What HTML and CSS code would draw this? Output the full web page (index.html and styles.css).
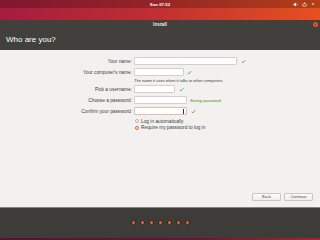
FILE: index.html
```html
<!DOCTYPE html>
<html lang="en">
<head>
    <meta charset="UTF-8">
    <title>Install</title>
    <link rel="stylesheet" href="styles.css">
</head>
<body>
<div class="screen">
    <div class="topbar">
        <span></span>
        <span class="clock">Sun 07:52</span>
        <span class="tray">
            <svg width="5" height="5" viewBox="0 0 10 10"><path d="M1 3.5h2l3-2.5v8l-3-2.5h-2z" fill="#fff"/><path d="M7.5 3a3 3 0 0 1 0 4" stroke="#fff" fill="none" stroke-width="1.2"/></svg>
            <svg width="5" height="5" viewBox="0 0 10 10"><path d="M3 2.6a3.6 3.6 0 1 0 4 0" stroke="#fff" fill="none" stroke-width="1.4"/><path d="M5 0.8v4" stroke="#fff" stroke-width="1.4"/></svg>
            <svg width="4" height="4" viewBox="0 0 10 10"><path d="M1.5 3.5h7l-3.5 4z" fill="#fff"/></svg>
        </span>
    </div>
    <div class="desktop-gap"></div>

    <div class="window">
        <div class="titlebar">
            <span></span>
            <span class="title">Install</span>
            <span class="close">
                <svg width="5" height="5" viewBox="0 0 10 10"><circle cx="5" cy="5" r="5" fill="#e9561f"/><path d="M3.3 3.3l3.4 3.4M6.7 3.3l-3.4 3.4" stroke="#3c3b37" stroke-width="1.3"/></svg>
            </span>
        </div>
        <div class="page-title">Who are you?</div>

        <div class="content">
            <div class="form">
                <div class="row">
                    <span class="label">Your name:</span>
                    <span class="field wide"></span>
                    <svg class="check" width="5" height="5" viewBox="0 0 10 10"><path d="M1.5 5.5l2.3 2.5 4.8-6" stroke="#6fae2b" fill="none" stroke-width="1.8"/></svg>
                </div>
                <div class="row">
                    <span class="label">Your computer's name:</span>
                    <span class="field host"></span>
                    <svg class="check" width="5" height="5" viewBox="0 0 10 10"><path d="M1.5 5.5l2.3 2.5 4.8-6" stroke="#6fae2b" fill="none" stroke-width="1.8"/></svg>
                </div>
                <div class="hint">The name it uses when it talks to other computers.</div>
                <div class="row">
                    <span class="label">Pick a username:</span>
                    <span class="field user"></span>
                    <svg class="check" width="5" height="5" viewBox="0 0 10 10"><path d="M1.5 5.5l2.3 2.5 4.8-6" stroke="#6fae2b" fill="none" stroke-width="1.8"/></svg>
                </div>
                <div class="row">
                    <span class="label">Choose a password:</span>
                    <span class="field pass"></span>
                    <span class="strength">Strong password</span>
                </div>
                <div class="row">
                    <span class="label">Confirm your password:</span>
                    <span class="field pass focused"><span class="cursor"></span></span>
                    <svg class="check" width="5" height="5" viewBox="0 0 10 10"><path d="M1.5 5.5l2.3 2.5 4.8-6" stroke="#6fae2b" fill="none" stroke-width="1.8"/></svg>
                </div>
                <div class="options">
                    <div class="option"><span class="radio"></span>Log in automatically</div>
                    <div class="option"><span class="radio checked"></span>Require my password to log in</div>
                </div>
            </div>

            <div class="actions">
                <span class="btn">Back</span>
                <span class="btn">Continue</span>
            </div>
        </div>

        <div class="progress">
            <span class="dot"></span>
            <span class="dot"></span>
            <span class="dot"></span>
            <span class="dot"></span>
            <span class="dot"></span>
            <span class="dot"></span>
            <span class="dot"></span>
        </div>
    </div>
    <div class="desktop-strip"></div>
</div>
</body>
</html>
```

FILE: styles.css
```css
body {
    margin: 0;
    font-family: "Liberation Sans", Arial, sans-serif;
    overflow: hidden;
}
.screen {
    width: 320px;
    height: 240px;
    display: flex;
    flex-direction: column;
    background: linear-gradient(90deg, #a41d3e 0%, #bd2d33 45%, #e5511f 100%);
}

/* top panel */
.topbar {
    height: 8px;
    display: grid;
    grid-template-columns: 1fr auto 1fr;
    align-items: center;
    background: rgba(0,0,0,0.22);
    color: #fff;
}
.clock {
    font-size: 4.3px;
    font-weight: bold;
}
.tray {
    justify-self: end;
    display: flex;
    align-items: center;
    gap: 4px;
    margin-right: 5px;
}
.tray svg { display: block; }
.desktop-gap { height: 12px; }

/* installer window */
.window {
    display: flex;
    flex-direction: column;
    background: #41403c;
}
.titlebar {
    height: 9px;
    display: grid;
    grid-template-columns: 1fr auto 1fr;
    align-items: center;
    color: #e8e8e6;
}
.title {
    font-size: 4.8px;
    font-weight: bold;
}
.close {
    justify-self: end;
    margin-right: 2px;
    display: flex;
}
.page-title {
    height: 21px;
    line-height: 21px;
    padding-left: 6px;
    font-size: 8px;
    color: #ffffff;
}

.content {
    height: 157px;
    background: #f2f1f0;
    border-bottom: 1px solid #85837f;
    display: flex;
    flex-direction: column;
}
.form {
    padding-top: 7px;
    display: flex;
    flex-direction: column;
}
.row {
    height: 8px;
    display: flex;
    align-items: center;
    margin-bottom: 3px;
    font-size: 4.8px;
    color: #3c3c3c;
}
.label {
    width: 132px;
    margin-right: 2px;
    text-align: right;
}
.field {
    height: 8px;
    box-sizing: border-box;
    background: #fff;
    border: 1px solid #d3cec9;
    border-radius: 1px;
    margin-right: 3px;
    display: flex;
    align-items: center;
    justify-content: flex-end;
}
.field.wide { width: 103px; margin-right: 4px; }
.field.host { width: 50px; }
.field.user { width: 41px; margin-right: 4px; }
.field.pass { width: 53px; }
.field.focused {
    border-color: #e6bba8;
    margin-right: 4px;
}
.cursor {
    width: 0.6px;
    height: 5px;
    background: #333;
    margin-right: 2px;
}
.check { display: block; }
.strength {
    font-size: 4.1px;
    color: #3f8a12;
}
.hint {
    height: 6px;
    line-height: 6px;
    margin: -1px 0 1px 134px;
    font-size: 4px;
    color: #3c3c3c;
}
.options {
    margin-left: 135px;
}
.option {
    height: 6.5px;
    display: flex;
    align-items: center;
    font-size: 4.8px;
    color: #3c3c3c;
}
.radio {
    width: 4px;
    height: 4px;
    box-sizing: border-box;
    border-radius: 50%;
    border: 0.6px solid #b8b3ae;
    background: #fdfdfd;
    margin-right: 2px;
}
.radio.checked {
    border: 1.2px solid #e9561f;
    background: #fff;
}

.actions {
    margin-top: auto;
    margin-bottom: 6px;
    padding-right: 7px;
    display: flex;
    justify-content: flex-end;
    gap: 3px;
}
.btn {
    width: 29px;
    height: 8px;
    box-sizing: border-box;
    border: 1px solid #cbc6c1;
    border-radius: 1px;
    background: linear-gradient(#fbfbfb, #efeeed);
    font-size: 4px;
    line-height: 6px;
    text-align: center;
    color: #4a4a4a;
}

.progress {
    height: 30px;
    box-sizing: border-box;
    padding-bottom: 2px;
    display: flex;
    align-items: center;
    justify-content: center;
    gap: 6px;
    background: #3d3c38;
}
.dot {
    width: 3px;
    height: 3px;
    border-radius: 50%;
    background: #ec6a32;
    box-shadow: 0 0 0 0.6px #1f1f1c;
}
.desktop-strip {
    height: 2px;
    background: linear-gradient(90deg, #5a0f34 0%, #6e1233 60%, #a6262a 100%);
}
```
